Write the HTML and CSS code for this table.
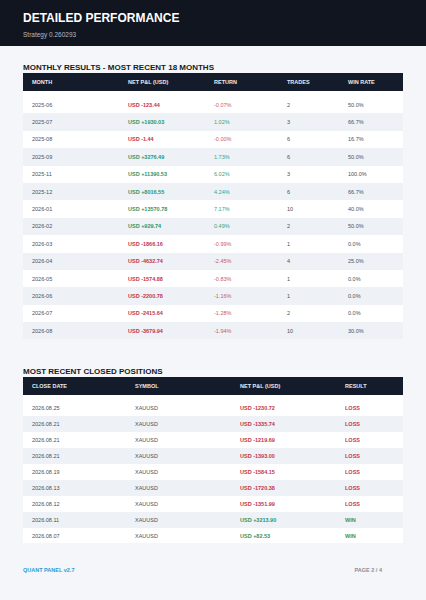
FILE: index.html
```html
<!DOCTYPE html>
<html lang="en">
<head>
    <meta charset="UTF-8">
    <meta name="viewport" content="width=device-width, initial-scale=1.0">
    <title>Detailed Performance</title>
    <link rel="stylesheet" href="styles.css">
</head>
<body>
    <div class="header">
        <h1>DETAILED PERFORMANCE</h1>
        <p class="strategy">Strategy 0.260293</p>
    </div>

    <div class="content">
        <h2>MONTHLY RESULTS - MOST RECENT 18 MONTHS</h2>
        <table class="monthly">
            <thead>
                <tr><th>MONTH</th><th>NET P&amp;L (USD)</th><th>RETURN</th><th>TRADES</th><th>WIN RATE</th></tr>
            </thead>
            <tbody>
                <tr><td>2025-06</td><td class="loss">USD -123.44</td><td class="neg">-0.07%</td><td>2</td><td>50.0%</td></tr>
                <tr><td>2025-07</td><td class="win">USD +1930.03</td><td class="pos">1.02%</td><td>3</td><td>66.7%</td></tr>
                <tr><td>2025-08</td><td class="loss">USD -1.44</td><td class="neg">-0.00%</td><td>6</td><td>16.7%</td></tr>
                <tr><td>2025-09</td><td class="win">USD +3276.49</td><td class="pos">1.73%</td><td>6</td><td>50.0%</td></tr>
                <tr><td>2025-11</td><td class="win">USD +11390.53</td><td class="pos">6.02%</td><td>3</td><td>100.0%</td></tr>
                <tr><td>2025-12</td><td class="win">USD +8016.55</td><td class="pos">4.24%</td><td>6</td><td>66.7%</td></tr>
                <tr><td>2026-01</td><td class="win">USD +13570.78</td><td class="pos">7.17%</td><td>10</td><td>40.0%</td></tr>
                <tr><td>2026-02</td><td class="win">USD +929.74</td><td class="pos">0.49%</td><td>2</td><td>50.0%</td></tr>
                <tr><td>2026-03</td><td class="loss">USD -1866.16</td><td class="neg">-0.99%</td><td>1</td><td>0.0%</td></tr>
                <tr><td>2026-04</td><td class="loss">USD -4632.74</td><td class="neg">-2.45%</td><td>4</td><td>25.0%</td></tr>
                <tr><td>2026-05</td><td class="loss">USD -1574.88</td><td class="neg">-0.83%</td><td>1</td><td>0.0%</td></tr>
                <tr><td>2026-06</td><td class="loss">USD -2200.78</td><td class="neg">-1.16%</td><td>1</td><td>0.0%</td></tr>
                <tr><td>2026-07</td><td class="loss">USD -2415.64</td><td class="neg">-1.28%</td><td>2</td><td>0.0%</td></tr>
                <tr><td>2026-08</td><td class="loss">USD -3679.94</td><td class="neg">-1.94%</td><td>10</td><td>30.0%</td></tr>
            </tbody>
        </table>

        <h2>MOST RECENT CLOSED POSITIONS</h2>
        <table class="closed">
            <thead>
                <tr><th>CLOSE DATE</th><th>SYMBOL</th><th>NET P&amp;L (USD)</th><th>RESULT</th></tr>
            </thead>
            <tbody>
                <tr><td>2026.08.25</td><td>XAUUSD</td><td class="loss">USD -1230.72</td><td class="loss">LOSS</td></tr>
                <tr><td>2026.08.21</td><td>XAUUSD</td><td class="loss">USD -1335.74</td><td class="loss">LOSS</td></tr>
                <tr><td>2026.08.21</td><td>XAUUSD</td><td class="loss">USD -1219.69</td><td class="loss">LOSS</td></tr>
                <tr><td>2026.08.21</td><td>XAUUSD</td><td class="loss">USD -1393.00</td><td class="loss">LOSS</td></tr>
                <tr><td>2026.08.19</td><td>XAUUSD</td><td class="loss">USD -1584.15</td><td class="loss">LOSS</td></tr>
                <tr><td>2026.08.13</td><td>XAUUSD</td><td class="loss">USD -1720.38</td><td class="loss">LOSS</td></tr>
                <tr><td>2026.08.12</td><td>XAUUSD</td><td class="loss">USD -1351.99</td><td class="loss">LOSS</td></tr>
                <tr><td>2026.08.11</td><td>XAUUSD</td><td class="win">USD +3213.90</td><td class="win">WIN</td></tr>
                <tr><td>2026.08.07</td><td>XAUUSD</td><td class="win">USD +82.53</td><td class="win">WIN</td></tr>
            </tbody>
        </table>
    </div>

    <div class="footer">
        <span class="brand">QUANT PANEL v2.7</span>
        <span class="page">PAGE 2 / 4</span>
    </div>
</body>
</html>
```

FILE: styles.css
```css
body {
    font-family: "Liberation Sans", Arial, sans-serif;
    background: #f4f6f9;
    color: #3a3f4a;
    margin: 0;
}
.header {
    background: #11151f;
    height: 46px;
    padding: 0 23px;
    box-sizing: border-box;
    overflow: hidden;
}
.header h1 {
    margin: 11px 0 0;
    font-size: 12px;
    line-height: 14px;
    color: #fff;
}
.strategy {
    margin: 6px 0 0;
    font-size: 6.5px;
    line-height: 8px;
    color: #b4b9c3;
}
.content {
    padding: 0 23px;
}
h2 {
    margin: 17px 0 0;
    font-size: 8px;
    line-height: 10px;
    color: #151a24;
}
table {
    width: 100%;
    border-collapse: collapse;
    background: #fff;
    font-size: 5.5px;
}
.monthly {
    margin-bottom: 28px;
}
th {
    background: #141b2b;
    color: #e8ebf0;
    text-align: left;
    font-weight: bold;
    height: 18px;
    padding: 0 0 0 9px;
}
td {
    padding: 0 0 0 9px;
    color: #4a505c;
}
tbody tr:nth-child(even) td {
    background: #eef1f5;
}
tbody tr:first-child td {
    border-top: 5px solid #fff;
}
.monthly td {
    height: 17.4px;
}
.closed td {
    height: 15.9px;
}
.monthly th:nth-child(1) { width: 87px; }
.monthly th:nth-child(2) { width: 77px; }
.monthly th:nth-child(3) { width: 64px; }
.monthly th:nth-child(4) { width: 52px; }
.closed th:nth-child(1) { width: 94px; }
.closed th:nth-child(2) { width: 96px; }
.closed th:nth-child(3) { width: 96px; }
.loss {
    color: #c0364c;
    font-weight: bold;
}
.win {
    color: #2b9670;
    font-weight: bold;
}
.neg {
    color: #cc5868;
}
.pos {
    color: #3aa283;
}
.footer {
    display: flex;
    justify-content: space-between;
    padding: 24px 44px 0 23px;
    font-size: 5.5px;
    font-weight: bold;
}
.brand {
    color: #2d9bd2;
}
.page {
    color: #8a8f99;
}
```
